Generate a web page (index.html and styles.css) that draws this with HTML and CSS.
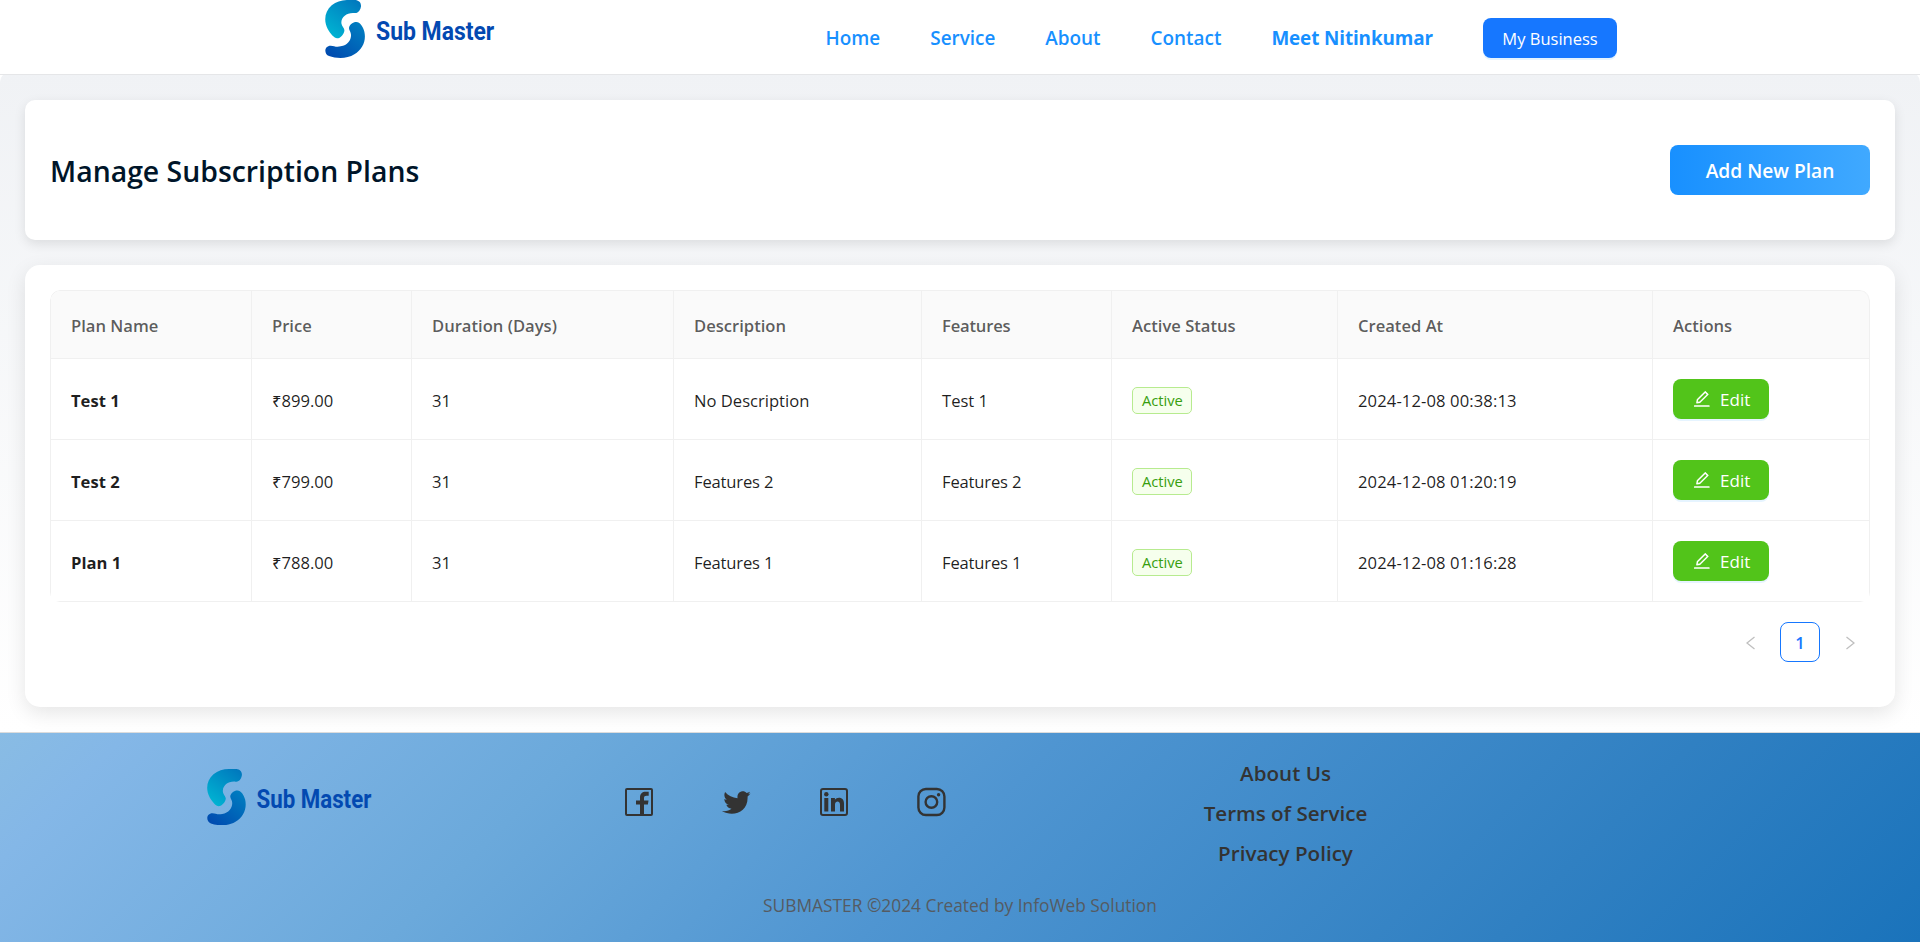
FILE: index.html
```html
<!DOCTYPE html>
<html lang="en">
<head>
<meta charset="utf-8">
<title>Sub Master</title>
<link rel="stylesheet" href="styles.css">
</head>
<body>
<svg class="sprite" aria-hidden="true">
  <defs>
    <linearGradient id="g-top" x1="0.2" y1="1" x2="0.9" y2="0"><stop offset="0" stop-color="#00b5d3"/><stop offset="1" stop-color="#0077bd"/></linearGradient>
    <linearGradient id="g-bottom" x1="0" y1="1" x2="0.9" y2="0"><stop offset="0" stop-color="#0046ae"/><stop offset="1" stop-color="#007fc1"/></linearGradient>
    <symbol id="logo" viewBox="0 0 510 175">
      <path fill="url(#g-top)" d="M78 0C94-2 108 2 108 18C107 30 99 41 88 39C66 37 50 50 49 66C48 78 59 84 58 92C57 101 47 115 36 115C28 115 16 101 8 87C-5 61-1 35 20 16C36 3 55-1 78 0Z"/>
      <path fill="url(#g-bottom)" d="M94 66C105 66 114 80 118 95C124 122 113 148 88 163C66 177 34 176 12 168C-4 162-3 137 17 137C27 138 34 142 47 139C67 136 78 121 78 105C78 94 71 91 72 83C74 74 83 66 94 66Z"/>
      <text class="logo-text" x="153" y="119" textLength="355" lengthAdjust="spacingAndGlyphs">Sub Master</text>
    </symbol>
    <symbol id="pen" viewBox="64 64 896 896">
      <path fill="currentColor" d="M257.700 752c2 0 4-.2 6-.5L431.900 722c2-.4 3.900-1.300 5.300-2.800l423.900-423.900a9.960 9.960 0 0 0 0-14.100L694.900 114.900c-1.900-1.900-4.400-2.900-7.100-2.900s-5.200 1-7.100 2.900L256.800 538.800c-1.500 1.500-2.400 3.300-2.800 5.300l-29.500 168.200a33.500 33.500 0 0 0 9.400 29.800c6.600 6.400 14.900 9.900 23.800 9.900zm67.400-174.400L687.800 215l73.300 73.300-362.700 362.600-88.900 15.700 15.600-89zM880 836H144c-17.700 0-32 14.300-32 32v36c0 4.400 3.600 8 8 8h784c4.400 0 8-3.600 8-8v-36c0-17.700-14.300-32-32-32z"/>
    </symbol>
  </defs>
</svg>
<header class="header">
  <svg class="header-logo"><use href="#logo"/></svg>
  <nav class="nav">
    <a class="nav-link">Home</a>
    <a class="nav-link">Service</a>
    <a class="nav-link">About</a>
    <a class="nav-link">Contact</a>
    <a class="nav-link nav-user">Meet Nitinkumar</a>
    <button class="business">My Business</button>
  </nav>
</header>
<main class="content">
  <section class="title-card">
    <h1 class="title">Manage Subscription Plans</h1>
    <button class="add">Add New Plan</button>
  </section>
  <section class="table-card">
    <table class="plans">
      <colgroup><col class="c1"><col class="c2"><col class="c3"><col class="c4"><col class="c5"><col class="c6"><col class="c7"><col class="c8"></colgroup>
      <thead>
        <tr><th>Plan Name</th><th>Price</th><th>Duration (Days)</th><th>Description</th><th class="features">Features</th><th>Active Status</th><th>Created At</th><th>Actions</th></tr>
      </thead>
      <tbody>
        <tr><td class="name">Test 1</td><td>₹899.00</td><td>31</td><td>No Description</td><td>Test 1</td><td class="status"><span class="tag">Active</span></td><td class="date">2024-12-08 00:38:13</td><td class="actions"><button class="edit"><svg class="edit-icon"><use href="#pen"/></svg><span>Edit</span></button></td></tr>
        <tr><td class="name">Test 2</td><td>₹799.00</td><td>31</td><td class="features">Features 2</td><td class="features">Features 2</td><td class="status"><span class="tag">Active</span></td><td class="date">2024-12-08 01:20:19</td><td class="actions"><button class="edit"><svg class="edit-icon"><use href="#pen"/></svg><span>Edit</span></button></td></tr>
        <tr><td class="name">Plan 1</td><td>₹788.00</td><td>31</td><td class="features">Features 1</td><td class="features">Features 1</td><td class="status"><span class="tag">Active</span></td><td class="date">2024-12-08 01:16:28</td><td class="actions"><button class="edit"><svg class="edit-icon"><use href="#pen"/></svg><span>Edit</span></button></td></tr>
      </tbody>
    </table>
    <div class="pagination">
      <span class="page-arrow"><svg class="chevron" viewBox="0 0 9 14"><path d="M8.500 1L1 7l7.500 6"/></svg></span>
      <span class="page-current">1</span>
      <span class="page-arrow"><svg class="chevron" viewBox="0 0 9 14"><path d="M.5 1L8 7l-7.500 6"/></svg></span>
    </div>
  </section>
</main>
<footer class="footer">
  <div class="footer-row">
    <svg class="footer-logo"><use href="#logo"/></svg>
    <div class="social">
      <svg class="social-icon" viewBox="0 0 30 30"><rect x="2" y="2" width="26" height="26" rx="1" fill="none" stroke="currentColor" stroke-width="2"/><path fill="currentColor" d="M16 28v-10.500h-4v-4h4v-3c0-3.800 2.300-5.700 5.700-5.700h3v4h-2.200c-1.700 0-2.500.8-2.500 2.200v2.500h4.500l-.6 4h-3.900V28z"/></svg>
      <svg class="social-icon" viewBox="1.500 0 30 30"><path fill="currentColor" d="M30 6.200c-1 .6-1.800.9-2.500 1.100.8-.5 1.600-1.500 1.900-2.500-1.100.6-2.100 1-3.300 1.200C23 2.400 16.200 4.800 17 11.200 12 10.900 7.600 8.600 4.600 5c-1.400 2.600-.8 5.900 1.700 7.700-.9 0-1.800-.3-2.500-.7 0 2.900 1.800 5 4.500 5.700-.8.2-1.600.2-2.500.1.800 2.300 2.700 3.700 5.200 3.900C8.700 23.500 5.500 24.500 1.500 24c11 6.500 25.800 1 25.600-13.400v-1.100C28.200 8.600 29.300 7.400 30 6.200z"/></svg>
      <svg class="social-icon" viewBox="0 0 30 30"><rect x="2" y="2" width="26" height="26" rx="2" fill="none" stroke="currentColor" stroke-width="2"/><circle cx="7.300" cy="7.300" r="2.200" fill="currentColor"/><path fill="currentColor" d="M5.300 11h4v13.500h-4zM12 11h3.900v1.800c1.800-3 9.100-3.200 9.100 3.700v8h-4v-7c0-4.200-5-3.900-5 0v7h-4z"/></svg>
      <svg class="social-icon" viewBox="0.600 0 30 30"><rect x="2" y="2" width="26" height="26" rx="7.500" fill="none" stroke="currentColor" stroke-width="2.400"/><circle cx="15" cy="15" r="5.800" fill="none" stroke="currentColor" stroke-width="2.400"/><circle cx="22.200" cy="7.800" r="1.700" fill="currentColor"/></svg>
    </div>
    <div class="links">
      <a>About Us</a>
      <a>Terms of Service</a>
      <a>Privacy Policy</a>
    </div>
  </div>
  <p class="copyright">SUBMASTER ©2024 Created by InfoWeb Solution</p>
</footer>
</body>
</html>
```
FILE: styles.css
```css
* { box-sizing: border-box; }
body {
  margin: 0;
  background: #fff;
  color: rgba(0, 0, 0, 0.88);
  font-family: "Open Sans", "Noto Sans", sans-serif;
  font-size: 16.600px;
  line-height: 1.5714;
}
button { font: inherit; border: 0; }
.sprite { position: absolute; width: 0; height: 0; }
.logo-text { font: 700 78px Roboto, sans-serif; fill: #0349b1; }

.header {
  position: relative;
  z-index: 1;
  display: flex;
  justify-content: space-between;
  height: 75px;
  padding: 0 303px 0 325px;
  border-bottom: 1px solid #e5e6e8;
  background: #fff;
}
.header-logo { width: 170px; height: 58.300px; }
.nav { display: flex; align-items: center; gap: 50px; padding-top: 2px; color: #1890ff; font-size: 18.900px; }
.nav-link { padding-top: 1px; font-weight: 600; white-space: nowrap; }
.nav-user { font-weight: 700; letter-spacing: -0.120px; }
.business {
  width: 134px;
  height: 40px;
  padding: 2px 0 0;
  border-radius: 8px;
  background: #1677ff;
  box-shadow: 0 2px 0 rgba(5, 145, 255, 0.1);
  color: #fff;
  font-size: 16.500px;
}

.content {
  display: flex;
  flex-direction: column;
  gap: 25px;
  margin-top: -3px;
  padding: 28px 25px 25px;
  border-radius: 10px;
  background: linear-gradient(180deg, #f0f2f5, #fff);
}
.title-card {
  display: flex;
  align-items: center;
  justify-content: space-between;
  height: 140px;
  padding: 0 25px;
  border-radius: 10px;
  background: #fff;
  box-shadow: 0 4px 12px rgba(0, 0, 0, 0.1);
}
.title { margin: 0; padding-top: 3px; color: #001529; font-size: 28.400px; font-weight: 600; }
.add {
  width: 200px;
  height: 50px;
  padding: 3px 0 0;
  border-radius: 8px;
  background: linear-gradient(90deg, #1890ff, #40a9ff);
  color: #fff;
  font-size: 19.200px;
  font-weight: 600;
}
.table-card {
  height: 442px;
  padding: 25px;
  border-radius: 15px;
  background: #fff;
  box-shadow: 0 6px 20px rgba(0, 0, 0, 0.1);
}
.plans {
  width: 1820px;
  table-layout: fixed;
  border-collapse: separate;
  border-spacing: 0;
  border: 1px solid #f0f0f0;
  border-width: 1px 0 0 1px;
  border-radius: 10px 10px 0 0;
  clip-path: inset(0 round 10px);
}
.c1 { width: 201px; }
.c2 { width: 160px; }
.c3 { width: 262px; }
.c4 { width: 248px; }
.c5 { width: 190px; }
.c6 { width: 226px; }
.c7 { width: 315px; }
.c8 { width: 217px; }
.plans th, .plans td {
  height: 81px;
  padding: 4px 20px 0;
  border: 1px solid #f0f0f0;
  border-width: 0 1px 1px 0;
  text-align: left;
}
.plans th { height: 68px; padding-top: 3px; background: #fafafa; color: rgba(0, 0, 0, 0.65); font-weight: 600; }
.plans th:first-child { border-top-left-radius: 9px; }
.plans th:last-child { border-top-right-radius: 10px; }
.plans .name { font-weight: 700; }
.plans .features { letter-spacing: -0.180px; }
.plans .date { letter-spacing: 0.110px; }
.plans .status { padding-top: 2px; }
.plans .actions { padding-top: 0; }
.tag {
  display: inline-flex;
  align-items: center;
  width: 60px;
  height: 27px;
  padding: 1px 0 0 9px;
  border: 1px solid #b7eb8f;
  border-radius: 5px;
  background: #f6ffed;
  color: #389e0d;
  font-size: 14.700px;
}
.edit {
  display: flex;
  align-items: center;
  gap: 9.500px;
  width: 96px;
  height: 40px;
  padding: 0 0 0 20px;
  border-radius: 8px;
  background: #52c41a;
  box-shadow: 0 2px 0 rgba(5, 145, 255, 0.1);
  color: #fff;
}
.edit span { padding-top: 3px; font-size: 17px; }
.edit-icon { width: 17.600px; height: 17.600px; }
.pagination { display: flex; justify-content: flex-end; gap: 10px; margin-top: 20px; }
.page-arrow, .page-current { display: flex; align-items: center; justify-content: center; width: 40px; height: 40px; }
.page-arrow { padding-top: 1px; }
.page-current { padding-top: 2px; border: 1px solid #1677ff; border-radius: 8px; color: #1677ff; font-weight: 600; }
.chevron { width: 9px; height: 14px; fill: none; stroke: #bfbfbf; stroke-width: 1.300; }

.footer {
  height: 210px;
  border-top: 1px solid #dcdcdc;
  background: linear-gradient(135deg, #89bce4 0%, #84b7e7 6%, #6ba9db 28%, #4f95d1 50%, #3080c2 80%, #1a73bb 100%);
  color: #333;
}
.footer-row { display: flex; padding: 20px 0 0 207px; height: 141px; }
.footer-logo { width: 165px; height: 56.700px; margin-top: 15.500px; }
.social { display: flex; gap: 67.500px; margin: 34px 0 0 252px; }
.social-icon { width: 30px; height: 30px; }
.links { display: flex; flex-direction: column; width: 200px; margin-left: 239px; align-items: center; font-size: 20.600px; font-weight: 600; line-height: 40px; }
.links a { white-space: nowrap; }
.copyright { margin: 18px 0 0; text-align: center; color: #555b62; font-size: 17.350px; }
```
